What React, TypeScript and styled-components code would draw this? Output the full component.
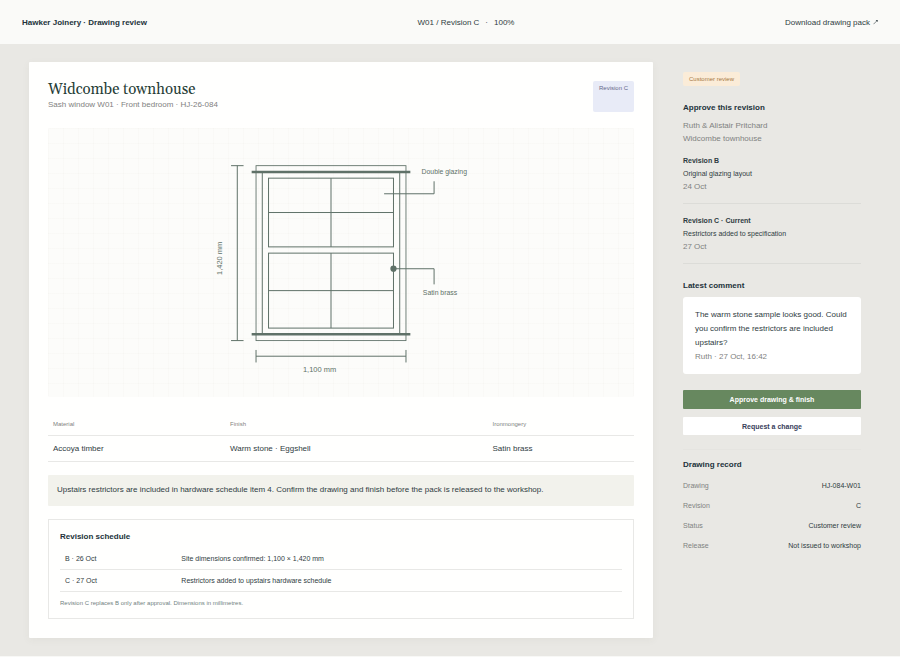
import React from "react";
import styled, { createGlobalStyle } from "styled-components";

const color = {
  ink: "#2f3c42",
  strong: "#22323a",
  muted: "#7f8281",
  line: "#dcdcd8",
  softLine: "#e8e8e6",
  drawing: "#5f7168",
};

const GlobalStyle = createGlobalStyle`
  *, *::before, *::after { box-sizing: border-box; }
  body {
    margin: 0;
    background: #f8f8f6;
    color: ${color.ink};
    font: 8px/13px "Liberation Sans", Arial, sans-serif;
  }
  h1, h2, h3, p, dl, dd, ul { margin: 0; padding: 0; }
  ul { list-style: none; }
`;

const Header = styled.header`
  display: flex;
  justify-content: space-between;
  align-items: center;
  height: 44px;
  padding: 0 22px;
  background: #fafaf8;
`;

const Brand = styled.strong`
  color: ${color.strong};
`;

const Crumb = styled.div`
  display: flex;
  gap: 6px;
`;

const Download = styled.a`
  display: inline-flex;
  align-items: center;
  gap: 3px;
  color: ${color.ink};
  text-decoration: none;
`;

const Workspace = styled.main`
  display: grid;
  grid-template-columns: minmax(0, 1fr) 178px;
  gap: 30px;
  align-items: start;
  padding: 18px 39px 18px 29px;
  background: #e9e8e4;
`;

const Sheet = styled.article`
  padding: 19px;
  background: #fffffe;
  border-radius: 1px;
  box-shadow: 0 2px 8px rgba(70, 70, 55, 0.05);
`;

const SheetHead = styled.div`
  display: flex;
  justify-content: space-between;
  height: 31px;
  margin-bottom: 16px;
`;

const Title = styled.h1`
  color: #263d36;
  font: 400 15px/17px Georgia, Gelasio, "Liberation Serif", serif;
`;

const Muted = styled.p`
  color: ${color.muted};
`;

const Tag = styled.span<{ $tone: "review" | "revision" }>`
  display: inline-block;
  padding: 0 6px;
  border-radius: 2px;
  background: ${(p) => (p.$tone === "review" ? "#fbecd8" : "#e8ebf7")};
  color: ${(p) => (p.$tone === "review" ? "#a77a44" : "#66698a")};
  font-size: 6px;
  line-height: 14px;
`;

const Canvas = styled.div`
  height: 269px;
  border-radius: 2px;
  background-color: #fcfcfa;
  background-image:
    linear-gradient(to right, rgba(130, 110, 80, 0.018) 1px, transparent 1px),
    linear-gradient(to bottom, rgba(130, 110, 80, 0.018) 1px, transparent 1px);
  background-size: 15px 15px;

  svg {
    display: block;
    width: 100%;
    height: 100%;
  }
`;

const SpecTable = styled.table`
  width: 100%;
  margin-top: 15px;
  border-collapse: collapse;
  table-layout: fixed;

  th, td {
    padding: 0 5px;
    border-bottom: 1px solid ${color.softLine};
    text-align: left;
  }
  th {
    height: 23px;
    padding-top: 2px;
    color: ${color.muted};
    font-size: 6px;
    font-weight: 400;
  }
  td { height: 26px; }
`;

const Col = styled.col<{ $share: number }>`
  width: ${(p) => p.$share}%;
`;

const Notice = styled.p`
  margin-top: 13px;
  padding: 8px 9px 10px;
  border-radius: 1px;
  background: #f2f2ec;
`;

const Schedule = styled.section`
  margin-top: 13px;
  padding: 10px 11px 8px;
  border: 1px solid ${color.softLine};
`;

const SubHeading = styled.h3`
  color: ${color.strong};
  font-size: 8px;
  line-height: 13px;
`;

const ScheduleTable = styled.table`
  width: 100%;
  margin-top: 5px;
  border-collapse: collapse;
  table-layout: fixed;
  font-size: 7px;

  td {
    height: 22px;
    padding: 0 5px;
    border-bottom: 1px solid ${color.softLine};
  }
`;

const Footnote = styled.p`
  margin-top: 5px;
  color: #71827e;
  font-size: 6px;
`;

const Aside = styled.aside`
  padding-top: 10px;
`;

const Heading = styled.h2`
  margin-bottom: 4px;
  color: ${color.strong};
  font-size: 8px;
  line-height: 14px;
`;

const Intro = styled.div`
  margin-top: 15px;
`;

const RevisionItem = styled.li`
  padding: 10px 0;
  border-bottom: 1px solid ${color.line};
  font-size: 7px;

  ${Muted} { font-size: 8px; }

  &:first-child { padding-top: 9px; }
`;

const RevisionList = styled.ul`
  margin-bottom: 15px;
`;

const Comment = styled.blockquote`
  margin: 0 0 16px;
  padding: 11px 12px 10px;
  border-radius: 3px;
  background: #fff;
  line-height: 14px;
`;

const Button = styled.button<{ $primary?: boolean }>`
  display: block;
  width: 100%;
  height: ${(p) => (p.$primary ? 19 : 18)}px;
  margin-bottom: 8px;
  padding: 0;
  border: 0;
  border-radius: 1px;
  background: ${(p) => (p.$primary ? "#67885f" : "#fff")};
  color: ${(p) => (p.$primary ? "#fff" : "#38405a")};
  font: 700 7px/13px "Liberation Sans", Arial, sans-serif;
  cursor: pointer;
`;

const Record = styled.section`
  margin-top: 14px;
  padding-top: 8px;
  border-top: 1px solid #e5e4e0;
`;

const RecordList = styled.dl`
  display: grid;
  gap: 7px;
  margin-top: 8px;
  font-size: 7px;

  div {
    display: flex;
    justify-content: space-between;
  }
  dt { color: ${color.muted}; }
`;

const record = [
  ["Drawing", "HJ-084-W01"],
  ["Revision", "C"],
  ["Status", "Customer review"],
  ["Release", "Not issued to workshop"],
];

const revisions = [
  { name: "Revision B", note: "Original glazing layout", date: "24 Oct" },
  { name: "Revision C · Current", note: "Restrictors added to specification", date: "27 Oct" },
];

const schedule = [
  ["B · 26 Oct", "Site dimensions confirmed: 1,100 × 1,420 mm"],
  ["C · 27 Oct", "Restrictors added to upstairs hardware schedule"],
];

function WindowDrawing() {
  return (
    <svg
      viewBox="0 0 938 430"
      role="img"
      aria-label="Sash window elevation, 1,100 mm wide by 1,420 mm high"
      fill="none"
      stroke={color.drawing}
      strokeWidth="1.6"
      fontFamily="Liberation Sans, Arial, sans-serif"
    >
      <rect x="333" y="60" width="240" height="280" strokeWidth="1.4" />
      <path d="M343 70V330M563 70V330" strokeWidth="1.6" />
      <path d="M326 70H580M326 330H580" strokeWidth="4" />
      <rect x="353" y="80" width="200" height="110" />
      <rect x="353" y="200" width="200" height="120" />
      <path d="M453 80V190M353 135H553M453 200V320M353 260H553" />
      <path d="M303 60V340M293 60H313M293 340H313" />
      <path d="M333 365H573M333 355V375M573 355V375" />
      <path d="M538 105H618V85M553 225H618V250" />
      <circle cx="553" cy="225" r="5" fill={color.drawing} stroke="none" />
      <g fill={color.drawing} stroke="none">
        <text x="408" y="390" fontSize="12">1,100 mm</text>
        <text x="279" y="235" fontSize="12" transform="rotate(-90 279 235)">1,420 mm</text>
        <text x="598" y="73" fontSize="11">Double glazing</text>
        <text x="600" y="267" fontSize="11">Satin brass</text>
      </g>
    </svg>
  );
}

export default function App() {
  return (
    <>
      <GlobalStyle />
      <Header>
        <Brand>Hawker Joinery · Drawing review</Brand>
        <Crumb>
          <span>W01 / Revision C</span>
          <span>·</span>
          <span>100%</span>
        </Crumb>
        <Download href="#download">
          Download drawing pack
          <svg width="5" height="6" viewBox="0 0 5 6" fill="none" stroke="currentColor" strokeWidth="0.6" aria-hidden="true">
            <path d="M0.5 5.2L4.2 1.5" />
            <path d="M2.7 1.1H4.6V3Z" fill="currentColor" stroke="none" />
          </svg>
        </Download>
      </Header>
      <Workspace>
        <Sheet>
          <SheetHead>
            <div>
              <Title>Widcombe townhouse</Title>
              <Muted>Sash window W01 · Front bedroom · HJ-26-084</Muted>
            </div>
            <Tag $tone="revision">Revision C</Tag>
          </SheetHead>
          <Canvas>
            <WindowDrawing />
          </Canvas>
          <SpecTable>
            <colgroup>
              <Col $share={30.2} />
              <Col $share={44.8} />
              <Col $share={25} />
            </colgroup>
            <thead>
              <tr>
                <th scope="col">Material</th>
                <th scope="col">Finish</th>
                <th scope="col">Ironmongery</th>
              </tr>
            </thead>
            <tbody>
              <tr>
                <td>Accoya timber</td>
                <td>Warm stone · Eggshell</td>
                <td>Satin brass</td>
              </tr>
            </tbody>
          </SpecTable>
          <Notice>
            Upstairs restrictors are included in hardware schedule item 4. Confirm the drawing and finish before the
            pack is released to the workshop.
          </Notice>
          <Schedule>
            <SubHeading>Revision schedule</SubHeading>
            <ScheduleTable>
              <colgroup>
                <Col $share={20.7} />
                <Col $share={79.3} />
              </colgroup>
              <tbody>
                {schedule.map(([date, note]) => (
                  <tr key={date}>
                    <td>{date}</td>
                    <td>{note}</td>
                  </tr>
                ))}
              </tbody>
            </ScheduleTable>
            <Footnote>Revision C replaces B only after approval. Dimensions in millimetres.</Footnote>
          </Schedule>
        </Sheet>
        <Aside>
          <Tag $tone="review">Customer review</Tag>
          <Intro>
            <Heading>Approve this revision</Heading>
            <Muted>Ruth &amp; Alistair Pritchard</Muted>
            <Muted>Widcombe townhouse</Muted>
          </Intro>
          <RevisionList>
            {revisions.map((r) => (
              <RevisionItem key={r.name}>
                <strong>{r.name}</strong>
                <p>{r.note}</p>
                <Muted>{r.date}</Muted>
              </RevisionItem>
            ))}
          </RevisionList>
          <Heading>Latest comment</Heading>
          <Comment>
            <p>The warm stone sample looks good. Could you confirm the restrictors are included upstairs?</p>
            <Muted>Ruth · 27 Oct, 16:42</Muted>
          </Comment>
          <Button type="button" $primary>
            Approve drawing &amp; finish
          </Button>
          <Button type="button">Request a change</Button>
          <Record>
            <SubHeading>Drawing record</SubHeading>
            <RecordList>
              {record.map(([label, value]) => (
                <div key={label}>
                  <dt>{label}</dt>
                  <dd>{value}</dd>
                </div>
              ))}
            </RecordList>
          </Record>
        </Aside>
      </Workspace>
    </>
  );
}
